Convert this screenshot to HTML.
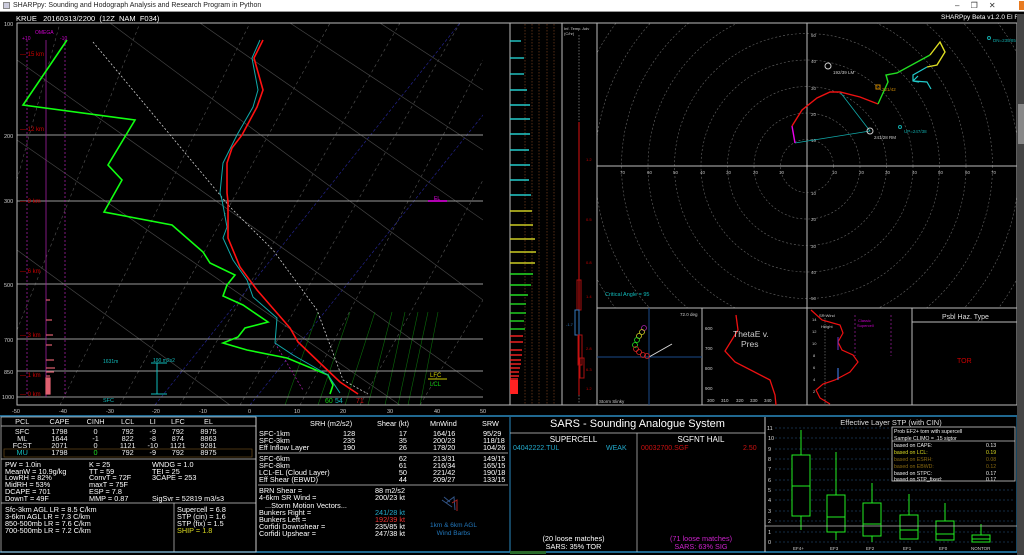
<!DOCTYPE html>
<html><head><meta charset="utf-8"><style>
*{margin:0;padding:0;box-sizing:border-box}
body{width:1024px;height:555px;background:#000;overflow:hidden;position:relative;font-family:"Liberation Sans",sans-serif;color:#fff}
.a{position:absolute;white-space:nowrap}
.t{font-size:7px;line-height:7px}
.tb td{padding:0;line-height:7px;font-size:7.3px}
</style></head><body>
<div class="a" style="left:0;top:0;width:1024px;height:12px;background:#fff;border-bottom:1px solid #999"></div>
<div class="a" style="left:3px;top:2px;width:7px;height:7px;border:1px solid #888;background:#ccd"></div>
<div class="a" style="left:13px;top:2px;font-size:7px;color:#222">SHARPpy: Sounding and Hodograph Analysis and Research Program in Python</div>
<div class="a" style="left:955px;top:1px;font-size:8px;color:#333">&#8211;&nbsp;&nbsp;&nbsp;&nbsp;&nbsp;&#10064;&nbsp;&nbsp;&nbsp;&nbsp;&nbsp;&#10005;</div>
<div class="a" style="left:1019px;top:1px;width:5px;height:9px;background:#e87a20"></div>
<div class="a" style="left:16px;top:14px;font-size:7.5px">KRUE&nbsp;&nbsp; 20160313/2200&nbsp; (12Z&nbsp; NAM&nbsp; F034)</div>
<div class="a" style="left:941px;top:14px;font-size:6.5px">SHARPpy Beta v1.2.0 El Reno</div>
<div class="a" style="left:1017px;top:14px;width:7px;height:541px;background:#444"></div>
<div class="a" style="left:1018px;top:104px;width:6px;height:40px;background:#888"></div>

<svg class="a" style="left:0;top:0" width="1017" height="555" xmlns="http://www.w3.org/2000/svg" font-family="Liberation Sans" font-size="6">
<defs><clipPath id="sk"><rect x="17" y="23" width="466" height="382"/></clipPath>
<clipPath id="ho"><rect x="597" y="23" width="420" height="285"/></clipPath></defs>
<g clip-path="url(#sk)">
<g stroke="#555" stroke-width="0.6" stroke-dasharray="3,3">
<line x1="17" y1="330" x2="140" y2="23"/><line x1="60" y1="405" x2="250" y2="23"/><line x1="120" y1="405" x2="330" y2="23"/><line x1="180" y1="405" x2="400" y2="23"/><line x1="240" y1="405" x2="460" y2="23"/><line x1="300" y1="405" x2="483" y2="60"/><line x1="360" y1="405" x2="483" y2="180"/><line x1="420" y1="405" x2="483" y2="300"/><line x1="17" y1="180" x2="60" y2="23"/>
</g>
<g stroke="#23238a" stroke-width="0.7" stroke-dasharray="3,2"><line x1="155" y1="405" x2="460" y2="23"/><line x1="250" y1="405" x2="483" y2="115"/></g>
<g stroke="#444" stroke-width="0.7" fill="none">
<path d="M17,60 L483,390"/><path d="M17,140 L400,405"/><path d="M110,23 L483,300"/><path d="M200,23 L483,220"/><path d="M17,250 L230,405"/><path d="M290,23 L483,150"/><path d="M380,23 L483,90"/>
</g>
<g stroke="#0a6a0a" stroke-width="0.6" fill="none"><path d="M318,312 L285,405"/><path d="M350,312 L318,405"/><path d="M375,312 L345,405"/><path d="M392,312 L368,405"/><path d="M405,312 L385,405"/><path d="M418,312 L398,405"/><path d="M428,312 L408,405"/><path d="M438,312 L420,405"/></g>
<g stroke="#999" stroke-width="1"><line x1="17" y1="135" x2="483" y2="135"/><line x1="17" y1="201" x2="483" y2="201"/><line x1="17" y1="284" x2="483" y2="284"/><line x1="17" y1="339" x2="483" y2="339"/><line x1="17" y1="371" x2="483" y2="371"/><line x1="17" y1="397" x2="483" y2="397"/></g>
<g stroke="#a020a0" stroke-width="0.8"><line x1="27" y1="40" x2="27" y2="397" stroke-dasharray="2,2"/><line x1="46" y1="40" x2="46" y2="397"/><line x1="65" y1="40" x2="65" y2="397" stroke-dasharray="2,2"/></g>
<g stroke="#e06070" stroke-width="1.2"><line x1="46" y1="300" x2="50" y2="300"/><line x1="46" y1="320" x2="52" y2="320"/><line x1="46" y1="335" x2="53" y2="335"/><line x1="46" y1="345" x2="52" y2="345"/><line x1="46" y1="360" x2="54" y2="360"/><line x1="46" y1="368" x2="55" y2="368"/><line x1="46" y1="372" x2="54" y2="372"/><line x1="46" y1="376" x2="50" y2="376"/><rect x="46" y="378" width="4" height="16" fill="#e06070"/></g>
<path d="M93,42 L230,207 L273,250 L317,310 L343,380 L368,394" stroke="#ccc" stroke-width="0.8" stroke-dasharray="2,2" fill="none"/>
<path d="M275,343 L303,390" stroke="#a020a0" stroke-width="0.8" stroke-dasharray="2,2" fill="none"/>
<path d="M67,40 L23,105 L135,120 L108,165 L122,180 L104,212 L172,225 L203,252 L210,263 L235,275 L227,285 L223,296 L243,305 L268,322 L245,328 L238,337 L223,343 L247,350 L287,358 L328,375 L333,385 L330,394" stroke="#1f1" stroke-width="1.6" fill="none"/>
<path d="M260,40 L252,58 L258,90 L253,107 L237,135 L223,163 L220,193 L222,200 L227,227 L223,238 L233,260 L247,280 L253,297 L277,318 L275,343 L293,355 L328,375 L340,393" stroke="#1aa" stroke-width="1" fill="none"/>
<path d="M263,40 L254,58 L263,90 L257,107 L242,135 L232,148 L227,163 L227,193 L228,202 L228,238 L240,267 L257,290 L277,313 L290,328 L298,342 L320,363 L340,382 L358,394" stroke="#f11" stroke-width="1.6" fill="none"/>
<line x1="428" y1="201" x2="447" y2="201" stroke="#e0e" stroke-width="1.5"/><text x="434" y="200" fill="#e0e" font-size="5">EL</text>
<line x1="428" y1="379" x2="447" y2="379" stroke="#cc0" stroke-width="1"/>
<text x="430" y="377" fill="#cc0" font-size="6">LFC</text><text x="430" y="386" fill="#1c1" font-size="6">LCL</text>
<line x1="157" y1="363" x2="157" y2="394" stroke="#1bb" stroke-width="1"/><line x1="151" y1="363" x2="167" y2="363" stroke="#1bb"/><line x1="151" y1="394" x2="167" y2="394" stroke="#1bb"/>
<text x="153" y="362" fill="#1bb" font-size="5">190 m2s2</text><text x="103" y="363" fill="#1bb" font-size="5">1631m</text>
<text x="103" y="402" fill="#1bb" font-size="5.5">SFC</text>
<text x="325" y="403" fill="#1c1" font-size="7">60</text><text x="335" y="403" fill="#1bb" font-size="7">54</text><text x="356" y="403" fill="#c11" font-size="7">71</text>
<g fill="#c00" font-size="6"><text x="20" y="56">— 15 km</text><text x="20" y="131">— 12 km</text><text x="20" y="203">— 9 km</text><text x="20" y="273">— 6 km</text><text x="20" y="337">— 3 km</text><text x="20" y="377">— 1 km</text><text x="20" y="396">— 0 km</text></g>
<g fill="#c0c" font-size="5"><text x="35" y="34">OMEGA</text><text x="22" y="40">+10</text><text x="60" y="40">-10</text></g>
<g stroke="#ddd" stroke-width="0.7" fill="none">
<path d="M488,35 L498,29 M488,35 L485,30 M490,34 L487,29 M492,33 L489,28"/><path d="M488,86 L498,80 M488,86 L485,81 M490,85 L487,80 M492,84 L489,79"/><path d="M488,127 L498,121 M488,127 L485,122"/><path d="M488,160 L498,154 M488,160 L485,155"/><path d="M488,190 L498,184 M488,190 L485,185"/>
<path d="M488,210 L498,204 M488,210 L485,205"/><path d="M488,230 L498,224 M488,230 L485,225"/><path d="M488,250 L498,244 M488,250 L485,245 M490,249 L487,244"/><path d="M488,265 L498,259 M488,265 L485,260 M490,264 L487,259"/><path d="M488,280 L498,274 M488,280 L485,275"/><path d="M488,300 L498,294 M488,300 L485,295"/><path d="M488,315 L498,309 M488,315 L485,310 M490,314 L487,309"/><path d="M488,330 L498,324 M488,330 L485,325 M490,329 L487,324"/><path d="M488,340 L498,334 M488,340 L485,335 M490,339 L487,334"/><path d="M488,355 L498,349 M488,355 L485,350 M490,354 L487,349"/><path d="M488,370 L498,364 M488,370 L485,365"/><path d="M488,380 L498,374 M488,380 L485,375"/><path d="M490,385 L496,375 M490,390 L497,382 M490,395 L498,388 M490,400 L500,395"/>
</g>
</g>
<rect x="17" y="23" width="493" height="382" fill="none" stroke="#bbb" stroke-width="1"/>
<g fill="#ccc" font-size="5.5"><text x="4" y="26">100</text><text x="4" y="138">200</text><text x="4" y="203">300</text><text x="4" y="287">500</text><text x="4" y="342">700</text><text x="4" y="374">850</text><text x="2" y="399">1000</text>
<text x="12" y="413">-50</text><text x="59" y="413">-40</text><text x="106" y="413">-30</text><text x="152" y="413">-20</text><text x="199" y="413">-10</text><text x="248" y="413">0</text><text x="294" y="413">10</text><text x="340" y="413">20</text><text x="387" y="413">30</text><text x="434" y="413">40</text><text x="480" y="413">50</text></g>
<rect x="510" y="23" width="52" height="382" fill="none" stroke="#bbb"/>
<g stroke="#8a4a20" stroke-width="0.6" stroke-dasharray="1.5,1.5"><line x1="525" y1="24" x2="525" y2="404"/><line x1="532" y1="24" x2="532" y2="404"/><line x1="539" y1="24" x2="539" y2="404"/><line x1="547" y1="24" x2="547" y2="404"/><line x1="554" y1="24" x2="554" y2="404"/></g>
<g stroke="#2cc" stroke-width="1.4"><line x1="510" y1="41" x2="521" y2="41"/><line x1="510" y1="58" x2="524" y2="58"/><line x1="510" y1="74" x2="524" y2="74"/><line x1="510" y1="90" x2="527" y2="90"/><line x1="510" y1="105" x2="530" y2="105"/><line x1="510" y1="119" x2="530" y2="119"/><line x1="510" y1="134" x2="530" y2="134"/><line x1="510" y1="150" x2="529" y2="150"/><line x1="510" y1="165" x2="530" y2="165"/><line x1="510" y1="180" x2="529" y2="180"/><line x1="510" y1="195" x2="531" y2="195"/></g>
<g stroke="#cc2" stroke-width="1.4"><line x1="510" y1="211" x2="532" y2="211"/><line x1="510" y1="225" x2="533" y2="225"/><line x1="510" y1="239" x2="535" y2="239"/><line x1="510" y1="252" x2="536" y2="252"/><line x1="510" y1="263" x2="535" y2="263"/></g>
<g stroke="#2d2" stroke-width="1.4"><line x1="510" y1="274" x2="533" y2="274"/><line x1="510" y1="285" x2="531" y2="285"/><line x1="510" y1="295" x2="528" y2="295"/><line x1="510" y1="304" x2="526" y2="304"/><line x1="510" y1="313" x2="526" y2="313"/><line x1="510" y1="321" x2="524" y2="321"/><line x1="510" y1="329" x2="525" y2="329"/></g>
<g stroke="#f22" stroke-width="1.4"><line x1="510" y1="336" x2="523" y2="336"/><line x1="510" y1="342" x2="523" y2="342"/><line x1="510" y1="350" x2="522" y2="350"/><line x1="510" y1="355" x2="522" y2="355"/><line x1="510" y1="360" x2="521" y2="360"/><line x1="510" y1="364" x2="521" y2="364"/><line x1="510" y1="368" x2="520" y2="368"/><line x1="510" y1="372" x2="519" y2="372"/><line x1="510" y1="376" x2="519" y2="376"/><line x1="510" y1="379" x2="518" y2="379"/></g>
<rect x="510" y="380" width="8" height="14" fill="#f22"/>
<rect x="562" y="23" width="35" height="382" fill="none" stroke="#bbb"/>
<line x1="579" y1="35" x2="579" y2="404" stroke="#aaa" stroke-width="0.6" stroke-dasharray="1.5,1.5"/>
<line x1="579" y1="122" x2="579" y2="395" stroke="#d11" stroke-width="1"/>
<rect x="577" y="280" width="4" height="30" fill="none" stroke="#a11"/><rect x="575" y="310" width="4" height="25" fill="none" stroke="#37b"/><rect x="578" y="335" width="4" height="30" fill="none" stroke="#a11"/><rect x="580" y="358" width="4" height="20" fill="none" stroke="#a11"/>
<text x="564" y="30" font-size="4" fill="#ccc">Inf. Temp. Adv</text><text x="564" y="35" font-size="4" fill="#ccc">(C/hr)</text>
<g fill="#c00" font-size="4"><text x="586" y="161">1.2</text><text x="586" y="221">0.5</text><text x="586" y="264">0.8</text><text x="586" y="298">1.4</text><text x="566" y="326" fill="#37b">-1.7</text><text x="586" y="350">2.8</text><text x="586" y="371">6.3</text><text x="586" y="390">1.2</text></g>
<g clip-path="url(#ho)" fill="none" stroke="#666" stroke-width="0.6" stroke-dasharray="2,2">
<circle cx="807" cy="166" r="26.5"/><circle cx="807" cy="166" r="53"/><circle cx="807" cy="166" r="79.5"/><circle cx="807" cy="166" r="106"/><circle cx="807" cy="166" r="132.5"/><circle cx="807" cy="166" r="159"/><circle cx="807" cy="166" r="185.5"/><circle cx="807" cy="166" r="212"/><circle cx="807" cy="166" r="238.5"/><circle cx="807" cy="166" r="265"/>
</g>
<rect x="597" y="23" width="420" height="285" fill="none" stroke="#bbb"/>
<line x1="807" y1="23" x2="807" y2="308" stroke="#bbb"/><line x1="597" y1="166" x2="1017" y2="166" stroke="#bbb"/>
<g fill="#bbb" font-size="4.5"><text x="811" y="37">50</text><text x="811" y="63">40</text><text x="811" y="90">30</text><text x="811" y="116">20</text><text x="811" y="142">10</text><text x="811" y="195">10</text><text x="811" y="221">20</text><text x="811" y="248">30</text><text x="811" y="274">40</text><text x="811" y="300">50</text>
<text x="620" y="174">70</text><text x="647" y="174">60</text><text x="673" y="174">50</text><text x="700" y="174">40</text><text x="726" y="174">30</text><text x="753" y="174">20</text><text x="779" y="174">10</text><text x="832" y="174">10</text><text x="859" y="174">20</text><text x="885" y="174">30</text><text x="912" y="174">40</text><text x="938" y="174">50</text><text x="965" y="174">60</text><text x="991" y="174">70</text></g>
<path d="M795,143 L870,131 L840,92" stroke="#1aa" stroke-width="0.8" fill="none"/>
<path d="M795,143 L792,126" stroke="#e0e" stroke-width="1.4" fill="none"/>
<path d="M792,126 L802,110 L817,98 L830,92 L840,92 L860,97 L878,104" stroke="#e11" stroke-width="1.4" fill="none"/>
<path d="M878,104 L888,82 L886,75 L897,73 L930,55" stroke="#2d2" stroke-width="1.4" fill="none"/>
<path d="M930,55 L940,42 L945,52 L937,65 L927,67" stroke="#dd2" stroke-width="1.4" fill="none"/>
<path d="M927,67 L913,75 L913,81 L927,82 L931,89 M913,81 L918,76 M913,81 L919,82" stroke="#2cc" stroke-width="1.2" fill="none"/>
<circle cx="828" cy="66" r="3" stroke="#ccc" fill="none"/><circle cx="870" cy="131" r="3" stroke="#ccc" fill="none"/><circle cx="900" cy="127" r="1.5" stroke="#1aa" fill="none"/><circle cx="989" cy="38" r="1.5" stroke="#1aa" fill="none"/>
<rect x="876" y="85" width="4" height="4" stroke="#c80" fill="none"/>
<text x="833" y="74" fill="#ccc" font-size="4.5">192/39 LM</text><text x="874" y="139" fill="#ccc" font-size="4.5">241/28 RM</text><text x="882" y="91" fill="#c80" font-size="4.5">221/42</text><text x="904" y="133" fill="#1aa" font-size="4.5">UP=247/38</text><text x="993" y="42" fill="#1aa" font-size="4.5">DN=235/85</text>
<text x="605" y="296" fill="#1bb" font-size="5.5">Critical Angle = 95</text>
<rect x="597" y="308" width="105" height="97" fill="none" stroke="#bbb"/><rect x="702" y="308" width="105" height="97" fill="none" stroke="#bbb"/><rect x="807" y="308" width="105" height="97" fill="none" stroke="#bbb"/><rect x="912" y="308" width="105" height="97" fill="none" stroke="#bbb"/>
<line x1="649" y1="308" x2="649" y2="405" stroke="#1a4a8a"/><line x1="597" y1="357" x2="702" y2="357" stroke="#1a4a8a"/>
<line x1="649" y1="357" x2="672" y2="344" stroke="#ddd"/>
<g fill="none" stroke-width="0.8"><circle cx="644" cy="328" r="2.5" stroke="#a2a"/><circle cx="642" cy="332" r="2.5" stroke="#cc2"/><circle cx="639" cy="336" r="2.5" stroke="#cc2"/><circle cx="637" cy="340" r="2.5" stroke="#2d2"/><circle cx="635" cy="345" r="2.5" stroke="#2d2"/><circle cx="636" cy="349" r="2.5" stroke="#d22"/><circle cx="639" cy="352" r="2.5" stroke="#d22"/><circle cx="643" cy="355" r="2.5" stroke="#d22"/><circle cx="647" cy="356" r="2.5" stroke="#d22"/></g>
<text x="680" y="316" fill="#ccc" font-size="4.5">72.0 deg</text><text x="599" y="403" fill="#ccc" font-size="4.5">Storm Slinky</text>
<path d="M736,315 L738,330 L725,351 L735,362 L770,380 L775,395 L776,405" stroke="#e11" stroke-width="1.3" fill="none"/>
<text x="733" y="337" fill="#ccc" font-size="8.5">ThetaE v.</text><text x="741" y="347" fill="#ccc" font-size="8.5">Pres</text>
<g fill="#ccc" font-size="4.5"><text x="705" y="330">600</text><text x="705" y="350">700</text><text x="705" y="370">800</text><text x="705" y="390">900</text><text x="707" y="402">300</text><text x="721" y="402">310</text><text x="736" y="402">320</text><text x="750" y="402">330</text><text x="764" y="402">340</text></g>
<g stroke="#a020a0" stroke-dasharray="2,2" stroke-width="0.7"><line x1="855" y1="315" x2="855" y2="356"/><line x1="891" y1="315" x2="891" y2="356"/></g>
<line x1="825" y1="315" x2="825" y2="405" stroke="#888" stroke-dasharray="1.5,1.5" stroke-width="0.6"/>
<path d="M811,310 L822,320 L840,325 L843,333 L838,342 L842,350 L853,355 L858,362 L850,372 L835,380 L823,384 L816,390 L820,398 L830,404" stroke="#e11" stroke-width="1.2" fill="none"/>
<line x1="838" y1="337" x2="838" y2="350" stroke="#63c" stroke-width="1"/><line x1="838" y1="368" x2="838" y2="380" stroke="#48f" stroke-width="1"/>
<text x="819" y="317" fill="#ccc" font-size="4">SR Wind</text><text x="821" y="328" fill="#ccc" font-size="4">Height</text><text x="858" y="322" fill="#c0c" font-size="4">Classic</text><text x="857" y="327" fill="#c0c" font-size="4">Supercell</text>
<g fill="#ccc" font-size="4"><text x="812" y="321">14</text><text x="812" y="333">12</text><text x="812" y="345">10</text><text x="813" y="357">8</text><text x="813" y="369">6</text><text x="813" y="381">4</text><text x="813" y="393">2</text></g>
<line x1="912" y1="322" x2="1017" y2="322" stroke="#bbb"/>
<text x="942" y="319" fill="#ddd" font-size="7">Psbl Haz. Type</text><text x="957" y="363" fill="#c00" font-size="7">TOR</text>
<line x1="0" y1="416" x2="1017" y2="416" stroke="#2a8ac0" stroke-width="1.5"/>
<line x1="0" y1="552" x2="1017" y2="552" stroke="#2a8ac0" stroke-width="1.5"/>
<rect x="1" y="417" width="255" height="135" fill="none" stroke="#ccc" stroke-width="0.7"/>
<line x1="256" y1="417" x2="256" y2="552" stroke="#ccc"/><line x1="510" y1="417" x2="510" y2="552" stroke="#2a8ac0"/><line x1="765" y1="417" x2="765" y2="552" stroke="#ccc"/><line x1="1017" y1="417" x2="1017" y2="552" stroke="#2a8ac0"/>
<line x1="1" y1="426" x2="256" y2="426" stroke="#ccc" stroke-width="0.7"/><line x1="1" y1="459" x2="256" y2="459" stroke="#ccc" stroke-width="0.7"/><line x1="1" y1="503" x2="256" y2="503" stroke="#ccc" stroke-width="0.7"/><line x1="174" y1="503" x2="174" y2="552" stroke="#ccc" stroke-width="0.7"/>
<rect x="4" y="449" width="248" height="8" fill="none" stroke="#6a4a1a" stroke-width="0.7"/>
<line x1="258" y1="453" x2="508" y2="453" stroke="#ccc" stroke-width="0.7"/><line x1="258" y1="485" x2="508" y2="485" stroke="#ccc" stroke-width="0.7"/>
<line x1="510" y1="433" x2="765" y2="433" stroke="#ccc" stroke-width="0.7"/><line x1="637" y1="433" x2="637" y2="552" stroke="#ccc" stroke-width="0.7"/>
<path d="M446,503 L454,497 L455,510 M442,500 L452,507 M444,497 L450,502" stroke="#358" stroke-width="1" fill="none"/><path d="M452,503 L457,500 L457,511" stroke="#a22" stroke-width="1" fill="none"/>
<g stroke="#2a5a8a" stroke-width="0.6" stroke-dasharray="2,2"><line x1="775" y1="428" x2="1015" y2="428"/><line x1="775" y1="438" x2="1015" y2="438"/><line x1="775" y1="449" x2="1015" y2="449"/><line x1="775" y1="459" x2="1015" y2="459"/><line x1="775" y1="469" x2="1015" y2="469"/><line x1="775" y1="480" x2="1015" y2="480"/><line x1="775" y1="490" x2="1015" y2="490"/><line x1="775" y1="500" x2="1015" y2="500"/><line x1="775" y1="511" x2="1015" y2="511"/><line x1="775" y1="521" x2="1015" y2="521"/><line x1="775" y1="532" x2="1015" y2="532"/><line x1="775" y1="542" x2="1015" y2="542"/></g>
<g fill="#ddd" font-size="5.5"><text x="767" y="430">11</text><text x="768" y="440">10</text><text x="768" y="451">9</text><text x="768" y="461">8</text><text x="768" y="471">7</text><text x="768" y="482">6</text><text x="768" y="492">5</text><text x="768" y="502">4</text><text x="768" y="513">3</text><text x="768" y="523">2</text><text x="768" y="534">1</text><text x="768" y="544">0</text></g>
<text x="891" y="425" text-anchor="middle" fill="#ddd" font-size="7.5">Effective Layer STP (with CIN)</text>
<g stroke="#2e2" stroke-width="1" fill="none">
<line x1="801" y1="430" x2="801" y2="530"/><rect x="792" y="455" width="18" height="61" fill="#000"/><line x1="792" y1="486" x2="810" y2="486"/>
<line x1="836" y1="452" x2="836" y2="540"/><rect x="827" y="495" width="18" height="37" fill="#000"/><line x1="827" y1="517" x2="845" y2="517"/>
<line x1="872" y1="483" x2="872" y2="542"/><rect x="863" y="503" width="18" height="33" fill="#000"/><line x1="863" y1="524" x2="881" y2="524"/>
<line x1="909" y1="494" x2="909" y2="539"/><rect x="900" y="515" width="18" height="24" fill="#000"/><line x1="900" y1="530" x2="918" y2="530"/>
<line x1="945" y1="503" x2="945" y2="540"/><rect x="936" y="521" width="18" height="19" fill="#000"/><line x1="936" y1="534" x2="954" y2="534"/>
<line x1="981" y1="524" x2="981" y2="542"/><rect x="972" y="535" width="18" height="7" fill="#000"/><line x1="972" y1="539" x2="990" y2="539"/>
</g>
<line x1="765" y1="526" x2="1017" y2="526" stroke="#bbb" stroke-width="0.8"/>
<g fill="#ccc" font-size="4.5"><text x="793" y="550">EF4+</text><text x="830" y="550">EF3</text><text x="866" y="550">EF2</text><text x="903" y="550">EF1</text><text x="939" y="550">EF0</text><text x="971" y="550">NONTOR</text></g>
<rect x="892" y="427" width="123" height="54" fill="#000" stroke="#ccc" stroke-width="0.8"/><line x1="892" y1="441" x2="1015" y2="441" stroke="#ccc" stroke-width="0.8"/>
<g font-size="5.2"><text x="894" y="433" fill="#eee">Prob EF2+ torn with supercell</text><text x="894" y="440" fill="#eee">Sample CLIMO = .15 sigtor</text>
<text x="894" y="447" fill="#eee">based on CAPE:</text><text x="986" y="447" fill="#eee">0.13</text>
<text x="894" y="454" fill="#dd2">based on LCL:</text><text x="986" y="454" fill="#dd2">0.19</text>
<text x="894" y="461" fill="#8a6a10">based on ESRH:</text><text x="986" y="461" fill="#8a6a10">0.08</text>
<text x="894" y="468" fill="#8a6a10">based on EBWD:</text><text x="986" y="468" fill="#8a6a10">0.12</text>
<text x="894" y="475" fill="#eee">based on STPC:</text><text x="986" y="475" fill="#eee">0.17</text>
<text x="894" y="481" fill="#eee">based on STP_fixed:</text><text x="986" y="481" fill="#eee">0.17</text></g>
<rect x="510" y="551" width="36" height="3" fill="#2a6a2a"/>
</svg>

<div class="a" style="left:4px;top:418px;width:250px">
<table class="tb" style="width:220px;text-align:center;border-collapse:collapse;color:#eee">
<tr><td>PCL</td><td>CAPE</td><td>CINH</td><td>LCL</td><td>LI</td><td>LFC</td><td>EL</td></tr>
<tr><td style="height:3px"></td></tr>
<tr><td>SFC</td><td>1798</td><td>0</td><td>792</td><td>-9</td><td>792</td><td>8975</td></tr>
<tr><td>ML</td><td>1644</td><td>-1</td><td>822</td><td>-8</td><td>874</td><td>8863</td></tr>
<tr><td>FCST</td><td>2071</td><td>0</td><td>1121</td><td>-10</td><td>1121</td><td>9281</td></tr>
<tr><td style="color:#1bb">MU</td><td>1798</td><td style="color:#2d2">0</td><td>792</td><td>-9</td><td>792</td><td>8975</td></tr>
</table></div>
<div class="a t" style="left:5px;top:462px;line-height:6.7px;font-size:7.3px">PW = 1.0in<br>MeanW = 10.9g/kg<br>LowRH = 82%<br>MidRH = 53%<br>DCAPE = 701<br>DownT = 49F</div>
<div class="a t" style="left:89px;top:462px;line-height:6.7px;font-size:7.3px">K = 25<br>TT = 59<br>ConvT = 72F<br>maxT = 75F<br>ESP = 7.8<br>MMP = 0.87</div>
<div class="a t" style="left:152px;top:462px;line-height:6.7px;font-size:7.3px">WNDG = 1.0<br>TEI = 25<br>3CAPE = 253<br><br><br>SigSvr = 52819 m3/s3</div>
<div class="a t" style="left:5px;top:506px;line-height:7px;font-size:7.3px">Sfc-3km AGL LR = 8.5 C/km<br>3-6km AGL LR = 7.3 C/km<br>850-500mb LR = 7.6 C/km<br>700-500mb LR = 7.2 C/km</div>
<div class="a t" style="left:177px;top:506px;line-height:7px;font-size:7.3px">Supercell = 6.8<br>STP (cin) = 1.6<br>STP (fix) = 1.5<br><span style="color:#dd2">SHIP = 1.8</span></div>
<div class="a t" style="left:310px;top:420px;font-size:7.3px">SRH (m2/s2)</div><div class="a t" style="left:377px;top:420px;font-size:7.3px">Shear (kt)</div><div class="a t" style="left:430px;top:420px;font-size:7.3px">MnWind</div><div class="a t" style="left:482px;top:420px;font-size:7.3px">SRW</div>
<div class="a t" style="left:259px;top:430px;font-size:7.3px;line-height:7px">SFC-1km<br>SFC-3km<br>Eff Inflow Layer</div>
<div class="a t" style="left:343px;top:430px;font-size:7.3px;line-height:7px">128<br>235<br>190</div>
<div class="a t" style="left:395px;top:430px;font-size:7.3px;line-height:7px;text-align:right;width:12px">17<br>35<br>26</div>
<div class="a t" style="left:433px;top:430px;font-size:7.3px;line-height:7px">164/16<br>200/23<br>178/20</div>
<div class="a t" style="left:483px;top:430px;font-size:7.3px;line-height:7px">95/29<br>118/18<br>104/26</div>
<div class="a t" style="left:259px;top:455px;font-size:7.3px;line-height:7px">SFC-6km<br>SFC-8km<br>LCL-EL (Cloud Layer)<br>Eff Shear (EBWD)</div>
<div class="a t" style="left:395px;top:455px;font-size:7.3px;line-height:7px;text-align:right;width:12px">62<br>61<br>50<br>44</div>
<div class="a t" style="left:433px;top:455px;font-size:7.3px;line-height:7px">213/31<br>216/34<br>221/42<br>209/27</div>
<div class="a t" style="left:483px;top:455px;font-size:7.3px;line-height:7px">149/15<br>165/15<br>190/18<br>133/15</div>
<div class="a t" style="left:259px;top:487px;font-size:7.3px;line-height:7px">BRN Shear =<br>4-6km SR Wind =</div>
<div class="a t" style="left:375px;top:487px;font-size:7.3px;line-height:7px">88 m2/s2<br>200/23 kt</div>
<div class="a t" style="left:265px;top:502px;font-size:7.3px">...Storm Motion Vectors...</div>
<div class="a t" style="left:259px;top:509px;font-size:7.3px;line-height:7px">Bunkers Right =<br>Bunkers Left =<br>Corfidi Downshear =<br>Corfidi Upshear =</div>
<div class="a t" style="left:375px;top:509px;font-size:7.3px;line-height:7px"><span style="color:#2ac">241/28 kt</span><br><span style="color:#e33">192/39 kt</span><br>235/85 kt<br>247/38 kt</div>
<div class="a t" style="left:430px;top:522px;font-size:6.5px;line-height:8px;color:#27b;text-align:center">1km &amp; 6km AGL<br>Wind Barbs</div>
<div class="a" style="left:510px;top:418px;width:255px;text-align:center;font-size:11px">SARS - Sounding Analogue System</div>
<div class="a" style="left:510px;top:435px;width:127px;text-align:center;font-size:8px">SUPERCELL</div>
<div class="a" style="left:637px;top:435px;width:128px;text-align:center;font-size:8px">SGFNT HAIL</div>
<div class="a t" style="left:513px;top:445px;color:#2ac;font-size:7px">04042222.TUL</div><div class="a t" style="left:606px;top:445px;color:#2ac;font-size:7px">WEAK</div>
<div class="a t" style="left:641px;top:445px;color:#c11;font-size:7px">00032700.SGF</div><div class="a t" style="left:743px;top:445px;color:#c11;font-size:7px">2.50</div>
<div class="a t" style="left:510px;top:535px;width:127px;text-align:center;font-size:7.3px;line-height:8px">(20 loose matches)<br>SARS: 35% TOR</div>
<div class="a t" style="left:637px;top:535px;width:128px;text-align:center;font-size:7.3px;line-height:8px;color:#c2c">(71 loose matches)<br>SARS: 63% SIG</div>
</body></html>
